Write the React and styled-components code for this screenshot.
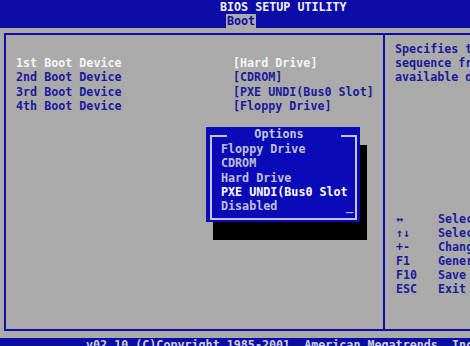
import React from 'react'
import styled, { createGlobalStyle } from 'styled-components'

const BLUE = '#0c0ca6'
const POP_BLUE = '#0a0ab8'
const GREY = '#aaaaaa'
const INK = '#1a1a9c'

const bootDevices = [
	{ label: '1st Boot Device', value: '[Hard Drive]', active: true },
	{ label: '2nd Boot Device', value: '[CDROM]' },
	{ label: '3rd Boot Device', value: '[PXE UNDI(Bus0 Slot]' },
	{ label: '4th Boot Device', value: '[Floppy Drive]' }
]

const helpKeys = [
	{ key: '↔', text: 'Select Screen' },
	{ key: '↑↓', text: 'Select Item' },
	{ key: '+-', text: 'Change Option' },
	{ key: 'F1', text: 'General Help' },
	{ key: 'F10', text: 'Save and Exit' },
	{ key: 'ESC', text: 'Exit' }
]

const options = [
	'Floppy Drive',
	'CDROM',
	'Hard Drive',
	'PXE UNDI(Bus0 Slot',
	'Disabled'
]

const App = () => {
	return (
		<>
			<GlobalStyle />
			<Screen>
				<Header>
					<Title>BIOS SETUP UTILITY</Title>
					<Tabs>
						<Tab active>Boot</Tab>
					</Tabs>
				</Header>

				<Frame>
					<MainPane>
						<DeviceGrid>
							{bootDevices.map((d) => (
								<React.Fragment key={d.label}>
									<Cell active={d.active}>{d.label}</Cell>
									<Cell active={d.active}>{d.value}</Cell>
								</React.Fragment>
							))}
						</DeviceGrid>
					</MainPane>
					<SidePane>
						<HelpLine>Specifies the boot</HelpLine>
						<HelpLine>sequence from the</HelpLine>
						<HelpLine>available devices.</HelpLine>
						<KeyList>
							{helpKeys.map((k) => (
								<KeyRow key={k.key}>
									<KeyName>{k.key}</KeyName>
									<KeyText>{k.text}</KeyText>
								</KeyRow>
							))}
						</KeyList>
					</SidePane>
				</Frame>

				<Footer>v02.10 (C)Copyright 1985-2001, American Megatrends, Inc.</Footer>

				<Popup>
					<PopupHead>
						<Corner side='left' />
						<PopupTitle>Options</PopupTitle>
						<Corner side='right' />
					</PopupHead>
					<PopupBody>
						{options.map((o, i) => (
							<Option key={o} selected={i === 3}>
								<span>{o}</span>
								{i === options.length - 1 && <span>_</span>}
							</Option>
						))}
					</PopupBody>
				</Popup>
			</Screen>
		</>
	)
}

export default App

const GlobalStyle = createGlobalStyle`
	html, body {
		margin: 0;
		padding: 0;
		overflow: hidden;
		background: ${GREY};
	}
	body {
		font-family: 'DejaVu Sans Mono', 'Liberation Mono', monospace;
		font-weight: bold;
		font-size: 11.7px;
	}
`

const Screen = styled.div`
	position: relative;
	width: 470px;
	height: 346px;
	overflow: hidden;
	display: flex;
	flex-direction: column;
	background: ${GREY};
	line-height: 14.3px;
`

const Header = styled.header`
	height: 28px;
	background: ${BLUE};
	display: flex;
	flex-direction: column;
	flex-shrink: 0;
`

const Title = styled.div`
	padding-left: 220px;
	line-height: 14px;
	color: #f2f2f2;
	white-space: nowrap;
`

const Tabs = styled.div`
	display: flex;
	padding-left: 226px;
`

const Tab = styled.span`
	padding: 0 1px;
	height: 15px;
	background: ${(p) => (p.active ? GREY : 'transparent')};
	color: ${(p) => (p.active ? BLUE : '#f2f2f2')};
`

const Frame = styled.div`
	margin: 5px 0 0 4px;
	height: 298px;
	box-sizing: border-box;
	border: 2px solid ${BLUE};
	border-right: none;
	display: flex;
	flex-shrink: 0;
`

const MainPane = styled.section`
	width: 379px;
	flex-shrink: 0;
	box-sizing: border-box;
	border-right: 2px solid ${BLUE};
	padding: 21px 0 0 10px;
`

const DeviceGrid = styled.div`
	display: grid;
	grid-template-columns: 217px auto;
	line-height: 14.4px;
`

const Cell = styled.div`
	color: ${(p) => (p.active ? '#f4f4f4' : INK)};
	white-space: nowrap;
`

const SidePane = styled.aside`
	flex: 1;
	min-width: 0;
	overflow: hidden;
	padding: 7px 0 0 10px;
	color: ${INK};
	white-space: nowrap;
`

const HelpLine = styled.div`
	line-height: 14.2px;
`

const KeyList = styled.div`
	margin-top: 127px;
	display: flex;
	flex-direction: column;
`

const KeyRow = styled.div`
	display: flex;
	line-height: 14px;
`

const KeyName = styled.span`
	width: 42px;
	padding-left: 1px;
	flex-shrink: 0;
`

const KeyText = styled.span``

const Footer = styled.footer`
	margin-top: 7px;
	flex: 1;
	background: ${BLUE};
	color: #d0d0d8;
	padding-left: 86px;
	white-space: nowrap;
	line-height: 14.3px;
`

const Popup = styled.div`
	position: absolute;
	left: 206px;
	top: 127px;
	width: 154px;
	box-sizing: border-box;
	padding: 1px 3px 2px 4px;
	background: ${POP_BLUE};
	box-shadow: 7px 18px 0 #000;
	display: flex;
	flex-direction: column;
`

const PopupHead = styled.div`
	display: grid;
	grid-template-columns: 17px 1fr 16px;
	height: 12px;
`

const Corner = styled.div`
	align-self: end;
	height: 3px;
	border-top: 2px solid #c4c4dc;
	border-${(p) => p.side}: 2px solid #c4c4dc;
`

const PopupTitle = styled.div`
	text-align: center;
	line-height: 12px;
	padding-right: 10px;
	color: #c8c8d8;
`

const PopupBody = styled.div`
	height: 80px;
	box-sizing: border-box;
	border: 2px solid #c4c4dc;
	border-top: none;
	padding: 2px 2px 0 9px;
	display: flex;
	flex-direction: column;
`

const Option = styled.div`
	display: flex;
	justify-content: space-between;
	line-height: 14.3px;
	white-space: nowrap;
	color: ${(p) => (p.selected ? '#ffffff' : '#c0c0d4')};
`
